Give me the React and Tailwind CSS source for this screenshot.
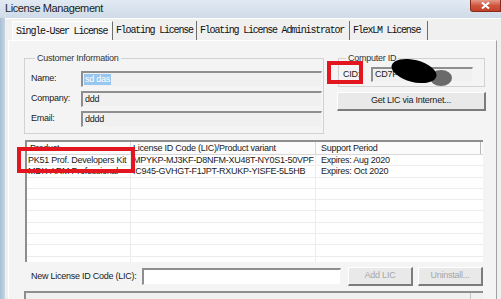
import React from "react";

const sans = "font-['Liberation_Sans',Arial,sans-serif]";
const mono = "font-['Liberation_Mono','Courier_New',monospace]";

const tabs = [
  { label: "Single-User License", active: true, w: "w-[101px]" },
  { label: "Floating License", w: "w-[84px]" },
  { label: "Floating License Administrator", w: "w-[153px]" },
  { label: "FlexLM License", w: "w-[78px]" },
];

const licenses = [
  ["PK51 Prof. Developers Kit", "MPYKP-MJ3KF-D8NFM-XU48T-NY0S1-50VPF", "Expires: Aug 2020"],
  ["MDK-ARM Professional", "IC945-GVHGT-F1JPT-RXUKP-YISFE-5L5HB", "Expires: Oct 2020"],
];

function Sunken({ className = "", children }) {
  return (
    <div
      className={`border-t-2 border-l-2 border-r border-b border-t-[#8e8e8e] border-l-[#8e8e8e] border-r-[#f4f4f4] border-b-[#f4f4f4] flex items-center ${className}`}
    >
      {children}
    </div>
  );
}

function Button({ children, disabled, className = "" }) {
  return (
    <button
      type="button"
      className={`flex items-center justify-center bg-[#e9e9e9] border border-t-white border-l-white border-r-2 border-b-2 border-r-[#7c7c7c] border-b-[#7c7c7c] text-[9px] tracking-[-0.25px] ${
        disabled ? "text-[#a7a7a7]" : "text-[#1a1a1a]"
      } ${className}`}
    >
      {children}
    </button>
  );
}

function InfoRow({ label, value, selected }) {
  return (
    <div className="flex items-center">
      <span className="w-[50px] text-[#1a1a1a]">{label}</span>
      <Sunken className="h-[16px] w-[241px] bg-[#f0f0f0] pl-[1px]">
        {selected ? (
          <span className="bg-[#97c6ef] text-white px-[1px] leading-[11px]">{value}</span>
        ) : (
          <span className="text-[#1a1a1a] pl-[1px]">{value}</span>
        )}
      </Sunken>
    </div>
  );
}

export default function App() {
  const rows = [...licenses, ...Array(8).fill(["", "", ""])];

  return (
    <div className={`w-[501px] h-[299px] overflow-hidden bg-[#d3deea] flex flex-col ${sans}`}>
      {/* title bar */}
      <div className="h-[18px] flex justify-between bg-gradient-to-b from-[#e2eaf3] to-[#cfdbe8] shrink-0">
        <span className="pl-[5px] pt-[2px] text-[11px] leading-[13px] tracking-[-0.4px] text-[#1c1c1c]">
          License Management
        </span>
        <div className="w-[31px] h-[12px] rounded-bl-[3px] border border-t-0 border-[#8b2a1c] bg-gradient-to-b from-[#e39a88] via-[#d0553f] to-[#c24128] flex items-center justify-center">
          <svg width="9" height="7" viewBox="0 0 9 7">
            <path d="M1 0.5 L8 6.5 M8 0.5 L1 6.5" stroke="#fff" strokeWidth="2" />
          </svg>
        </div>
      </div>

      <div className="flex flex-1 min-h-0">
        <div className="w-[5px] bg-gradient-to-r from-[#a9bed4] to-[#c6d5e5] shrink-0" />
        <div className="flex-1 bg-[#f0f0f0] border-t border-t-white flex flex-col">
          {/* tabs */}
          <div className={`flex ml-[7px] mt-[2px] h-[19px] items-stretch ${mono}`}>
            {tabs.map((t) => (
              <div
                key={t.label}
                className={`${t.w} flex items-center border-r border-r-[#6d6d6d] text-[10px] tracking-[-1.2px] text-[#111] ${
                  t.active ? "bg-[#f6f6f6] border-t border-l border-t-white border-l-white pl-[3px]" : "pl-[3px]"
                }`}
              >
                {t.label}
              </div>
            ))}
          </div>

          {/* tab panel */}
          <div className="flex-1 ml-[3px] mr-[4px] bg-[#f4f4f4] border-t border-l border-r border-t-white border-l-white border-r-[#a0a0a0] pl-[15px] pt-[12px] text-[9px] tracking-[-0.25px] text-[#1a1a1a] flex flex-col">
            <div className="flex">
              <fieldset className="w-[300px] border border-[#d2d2d2] pl-[6px] pr-[1px] pb-[6px]">
                <legend className="ml-[4px] px-[2px] leading-[11px] text-[#333]">Customer Information</legend>
                <div className="flex flex-col gap-[4px] mt-[7px]">
                  <InfoRow label="Name:" value="sd das" selected />
                  <InfoRow label="Company:" value="ddd" />
                  <InfoRow label="Email:" value="dddd" />
                </div>
              </fieldset>

              <div className="ml-[13px] w-[149px] flex flex-col">
                <div className="relative mx-[1px]">
                  <fieldset className="border border-[#d2d2d2] pl-[4px] pb-[4px]">
                    <legend className="ml-[3px] px-[2px] leading-[11px] text-[#333]">Computer ID</legend>
                    <div className="flex items-center mt-[3px]">
                      <span className="w-[28px]">CID:</span>
                      <Sunken className="h-[15px] w-[102px] bg-[#f0f0f0] pl-[2px]">CD7F</Sunken>
                    </div>
                  </fieldset>
                  {/* redaction blot */}
                  <svg className="absolute left-[50px] top-[4px]" width="70" height="32" viewBox="0 0 70 32">
                    <ellipse cx="53" cy="21" rx="11" ry="8" fill="#6a6a6a" />
                    <ellipse cx="26" cy="14" rx="23" ry="11" transform="rotate(14 26 14)" fill="#000" />
                  </svg>
                  {/* red highlight */}
                  <div className="absolute -left-[11px] top-[8px] w-[36px] h-[23px] border-4 border-[#e3161f]" />
                </div>
                <Button className="mt-[5px] h-[19px] w-[149px]">Get LIC via Internet...</Button>
              </div>
            </div>

            {/* license list */}
            <div className="relative mt-[6px] ml-[1px] w-[458px] h-[122px] bg-white border-t-2 border-l-2 border-t-[#8e8e8e] border-l-[#8e8e8e] overflow-hidden">
              <div className="grid grid-cols-[104px_185px_1fr] h-[13px] border-b border-[#d8d8d8] bg-[#fbfbfb]">
                <div className="pl-[3px] border-r border-[#d8d8d8] leading-[12px]">Product</div>
                <div className="pl-[2px] border-r border-[#d8d8d8] leading-[12px]">License ID Code (LIC)/Product variant</div>
                <div className="pl-[5px] border-r border-[#b8b8b8] leading-[12px] mr-[2px]">Support Period</div>
              </div>
              {rows.map((r, i) => (
                <div key={i} className="grid grid-cols-[104px_185px_1fr] h-[11.3px] border-b border-[#ececec]">
                  <div className="pl-[1px] border-r border-[#ececec] leading-[10px] whitespace-nowrap">{r[0]}</div>
                  <div className="pl-[2px] border-r border-[#ececec] leading-[10px] whitespace-nowrap">{r[1]}</div>
                  <div className="pl-[5px] leading-[10px] whitespace-nowrap">{r[2]}</div>
                </div>
              ))}
            </div>

            {/* new LIC */}
            <div className="flex items-center mt-[5px] ml-[7px] h-[19px]">
              <span className="w-[111px]">New License ID Code (LIC):</span>
              <Sunken className="h-[17px] w-[199px] bg-white" />
              <Button disabled className="ml-[7px] h-[19px] w-[65px]">Add LIC</Button>
              <Button disabled className="ml-[5px] h-[19px] w-[65px]">Uninstall...</Button>
            </div>

            <div className="mt-[5px] w-[459px] flex-1 border-t-2 border-l-2 border-t-[#8e8e8e] border-l-[#8e8e8e] bg-[#f0f0f0] flex justify-end">
              <div className="w-[13px] border-l border-[#c8c8c8]" />
            </div>
          </div>
        </div>
      </div>

      {/* red highlight over the product list, spilling past the list's left edge */}
      <div className="absolute left-[17px] top-[147px] w-[118px] h-[26px] border-4 border-[#e3161f]" />
    </div>
  );
}
